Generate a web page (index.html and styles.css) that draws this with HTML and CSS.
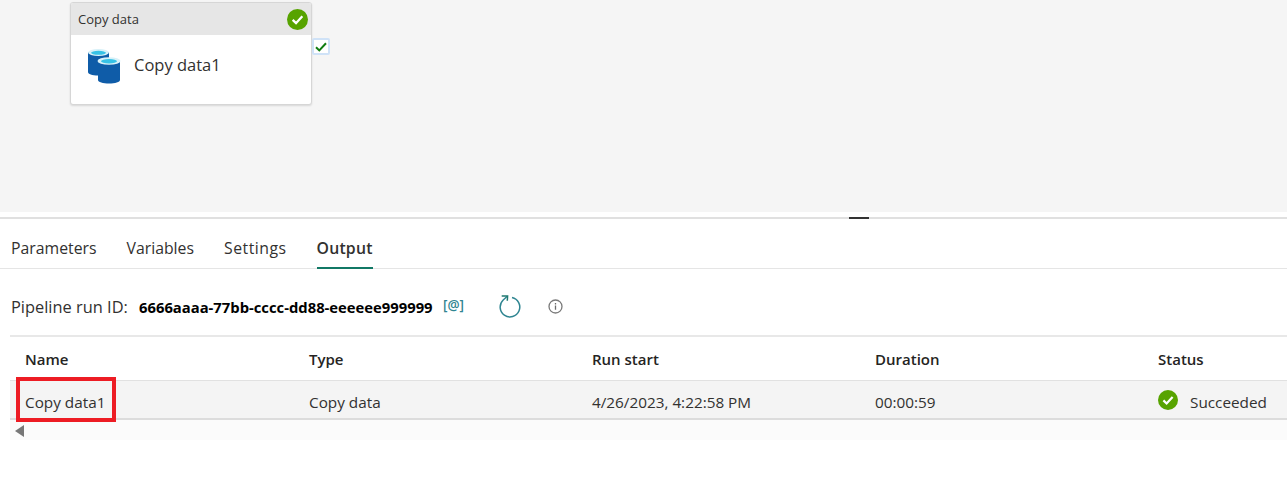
FILE: index.html
```html
<!DOCTYPE html>
<html>
	<head>
		<meta charset="UTF-8">
		<title>Copy data output</title>
		<link rel="stylesheet" href="styles.css">
	</head>
	<body>
		<div class="canvas">
			<div class="node">
				<div class="node-tit">
					<span>Copy data</span>
					<svg class="ok" width="21" height="21" viewBox="0 0 20 20"><circle cx="10" cy="10" r="10" fill="#57a300"/><path d="M5.4 10.400l3.200 3.100 6-6.600" fill="none" stroke="#fff" stroke-width="2.200"/></svg>
				</div>
				<div class="node-con">
					<svg width="34" height="36" viewBox="0 0 34 36">
						<path d="M1 4v20c0 2 4 3.500 10 3.500s11-1.500 11-3.500V4z" fill="#0f5ca8"/>
						<ellipse cx="11.500" cy="4.500" rx="10.500" ry="3.500" fill="#d8f1f8"/>
						<ellipse cx="11.500" cy="4.800" rx="7.500" ry="2" fill="#37c2e6"/>
						<path d="M11 13v19c0 2 5 3.500 11 3.500s11-1.500 11-3.500V13z" fill="#0f5ca8"/>
						<ellipse cx="22" cy="13" rx="11.500" ry="3.800" fill="#d8f1f8"/>
						<ellipse cx="22" cy="13.300" rx="8" ry="2.200" fill="#37c2e6"/>
					</svg>
					<span class="node-name">Copy data1</span>
				</div>
			</div>
			<div class="port">
				<svg width="12" height="10" viewBox="0 0 12 10"><path d="M1 5.200l3.300 3.200L11 1.200" fill="none" stroke="#107c10" stroke-width="2"/></svg>
			</div>
		</div>
		<div class="pane">
			<div class="grip"></div>
			<ul class="tabs">
				<li>Parameters</li>
				<li>Variables</li>
				<li class="tab-wide">Settings</li>
				<li class="select">Output</li>
			</ul>
			<div class="run">
				<span class="run-label">Pipeline run ID:</span>
				<span class="run-id">6666aaaa-77bb-cccc-dd88-eeeeee999999</span>
				<span class="run-at">[@]</span>
				<svg class="run-refresh" width="22" height="23" viewBox="0 0 22 23"><path d="M8 1.500L4.200 5A9.800 9.800 0 1 0 13 2.500" fill="none" stroke="#2f8591" stroke-width="1.500"/><path d="M2.700 1h5.900l-.3 4.800" fill="none" stroke="#1f7a70" stroke-width="1.500"/></svg>
				<svg class="run-info" width="15" height="15" viewBox="0 0 15 15"><circle cx="7.500" cy="7.500" r="6.500" fill="none" stroke="#7a7a7a" stroke-width="1.300"/><path d="M7.500 6.500v4.300M7.500 4v1.400" stroke="#6b6b6b" stroke-width="1.300"/></svg>
			</div>
			<div class="table">
				<div class="row head">
					<div>Name</div>
					<div>Type</div>
					<div>Run start</div>
					<div>Duration</div>
					<div>Status</div>
				</div>
				<div class="row body">
					<div class="name-cell">Copy data1<span class="mark"></span></div>
					<div>Copy data</div>
					<div>4/26/2023, 4:22:58 PM</div>
					<div>00:00:59</div>
					<div class="status">
						<svg width="20" height="20" viewBox="0 0 20 20"><circle cx="10" cy="10" r="10" fill="#57a300"/><path d="M5.400 10.400l3.200 3.100 6-6.600" fill="none" stroke="#fff" stroke-width="2.200"/></svg>
						Succeeded
					</div>
				</div>
				<div class="scroll"><span class="scroll-left"></span></div>
			</div>
		</div>
	</body>
</html>
```

FILE: styles.css
```css
*{
	margin:0;
	padding:0;
	list-style:none;
	box-sizing:border-box;
}
body{
	font-family:"Open Sans","Noto Sans",sans-serif;
	color:#323130;
	background:#fff;
}
.canvas{
	height:212px;
	background:#f5f5f5;
	position:relative;
}
.node{
	position:absolute;
	left:70px;
	top:2px;
	width:242px;
	height:103px;
	background:#fff;
	border:1px solid #d6d6d6;
	border-radius:3px;
	box-shadow:0 1px 2px rgba(0,0,0,.12);
	overflow:hidden;
}
.node-tit{
	height:32px;
	background:#e6e6e6;
	display:flex;
	align-items:center;
	justify-content:space-between;
	padding:0 3px 0 7px;
	font-size:13px;
}
.node-con{
	display:flex;
	align-items:center;
	gap:13px;
	padding:13px 0 0 16px;
	font-size:16.500px;
}
.node-name{
	margin-top:-4px;
}
.port{
	position:absolute;
	left:312px;
	top:38px;
	width:18px;
	height:17px;
	background:#fff;
	border:2px solid #cfe2f7;
	border-radius:2px;
	display:flex;
	align-items:center;
	justify-content:center;
}
.pane{
	padding-top:5px;
	position:relative;
}
.grip{
	height:2px;
	background:#e0e0e0;
	position:relative;
}
.grip:after{
	content:"";
	position:absolute;
	left:849px;
	top:0;
	width:20px;
	height:2px;
	background:#333;
}
.tabs{
	display:flex;
	gap:30px;
	height:50px;
	padding-left:11px;
	border-bottom:1px solid #e5e5e5;
	font-size:15.800px;
}
.tabs li{
	line-height:58px;
	height:50px;
}
.tabs li.tab-wide{
	letter-spacing:.5px;
}
.tabs li.select{
	font-weight:600;
	letter-spacing:.2px;
	border-bottom:2px solid #117865;
}
.run{
	display:flex;
	align-items:center;
	height:66px;
	padding:10px 0 1px 11px;
}
.run-label{
	font-size:16.400px;
	width:128px;
}
.run-id{
	font-size:14.800px;
	font-weight:700;
	color:#000;
	width:304px;
	white-space:nowrap;
}
.run-at{
	font-size:13.500px;
	font-weight:600;
	color:#2f8591;
	width:56px;
	margin-top:-4px;
}
.run-refresh{
	margin-right:27px;
}
.table{
	margin-left:10px;
}
.row{
	display:grid;
	grid-template-columns:284px 283px 283px 283px 1fr;
	padding-left:15px;
	align-items:center;
}
.head{
	height:45px;
	border-top:2px solid #e8e8e8;
	font-size:15px;
	font-weight:600;
	color:#252423;
}
.body{
	height:40px;
	background:#f4f4f4;
	border-top:1px solid #e1e1e1;
	border-bottom:2px solid #dcdcdc;
	padding-top:5px;
	font-size:15.300px;
}
.name-cell{
	position:relative;
}
.mark{
	position:absolute;
	left:-9px;
	top:-15px;
	width:100px;
	height:45px;
	border:4px solid #ed1c24;
}
.status{
	display:flex;
	align-items:center;
	gap:12px;
}
.status svg{
	margin-top:-4px;
}
.scroll{
	height:20px;
	background:#fbfbfb;
	padding:5px 0 0 5px;
}
.scroll-left{
	display:block;
	width:0;
	height:0;
	border-style:solid;
	border-width:6px 9px 6px 0;
	border-color:transparent #777 transparent transparent;
}
```
